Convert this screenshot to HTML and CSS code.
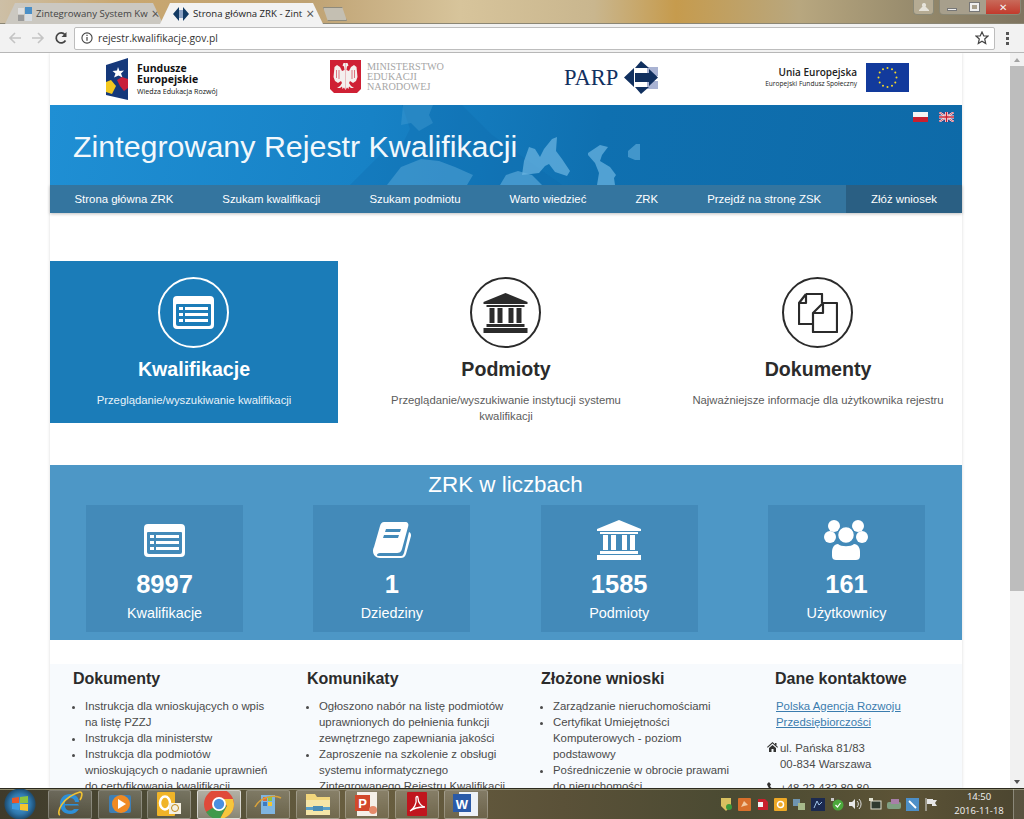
FILE: index.html
```html
<!DOCTYPE html>
<html lang="pl">
<head>
    <meta charset="UTF-8">
    <meta name="viewport" content="width=device-width, initial-scale=1.0">
    <title>Strona główna ZRK</title>
    <link rel="stylesheet" href="styles.css">
</head>
<body>
    <!-- shared icons -->
    <svg class="defs" width="0" height="0">
        <symbol id="i-list" viewBox="0 0 41 33">
            <path fill-rule="evenodd" d="M4 0h33a4 4 0 0 1 4 4v25a4 4 0 0 1-4 4H4a4 4 0 0 1-4-4V4a4 4 0 0 1 4-4zM4 8a1 1 0 0 0-1 1v19a2 2 0 0 0 2 2h31a2 2 0 0 0 2-2V9a1 1 0 0 0-1-1zM6 11h4v3H6zM12 11h23v3H12zM6 17h4v3H6zM12 17h23v3H12zM6 23h4v3H6zM12 23h23v3H12z"/>
        </symbol>
        <symbol id="i-bank" viewBox="0 0 44 40">
            <path d="M22 0l22 9v2H0V9zM3 12h38v2H3zM6 15h5v15H6zM14 15h5v15h-5zM25 15h5v15h-5zM33 15h5v15h-5zM3 31h38v3H3zM0 35h44v5H0z"/>
        </symbol>
        <symbol id="i-book" viewBox="0 0 38 36">
            <path fill-rule="evenodd" d="M11 0h21c3 0 4 2 3 5l-6 22c-1 3-2 4-6 4H7c-2 0-3 1-3 2s1 1 3 1h21c2 0 2-1 3-3l5-21c2 1 2 2 2 4l-5 18c-1 3-3 4-5 4H7c-4 0-7-3-7-7 0-1 0-2 1-4L7 4c1-3 2-4 4-4zM13 7l-1 3h15l1-3zM11 13l-1 3h15l1-3z"/>
        </symbol>
        <symbol id="i-users" viewBox="0 0 44 40">
            <circle cx="10" cy="6" r="6"/>
            <circle cx="34" cy="6" r="6"/>
            <circle cx="6" cy="17" r="6"/>
            <circle cx="38" cy="17" r="6"/>
            <path d="M14 24c-4 0-6 4-6 8v4c0 3 2 4 4 4h20c2 0 4-1 4-4v-4c0-4-2-8-6-8-3 3-13 3-16 0z"/>
            <circle cx="22" cy="15" r="8.500" stroke="#438ab9" stroke-width="1.500"/>
        </symbol>
    </svg>

    <header class="tabstrip">
        <div class="tab">
            <span class="tab-favicon">
                <svg width="14" height="14" viewBox="0 0 14 14"><rect x="7" width="7" height="7" fill="#4a8fc7"/><rect y="7" x="7" width="7" height="7" fill="#d8dde2"/><rect width="6" height="6" y="1" fill="#dfdfdf"/><rect y="8" width="6" height="6" fill="#9a9a9a"/></svg>
            </span>
            <span class="tab-title">Zintegrowany System Kw</span>
            <span class="tab-close">×</span>
        </div>
        <div class="tab tab-active">
            <span class="tab-favicon">
                <svg width="16" height="14" viewBox="0 0 16 14"><path d="M6 0v14L0 7zM10 0v14l6-7z" fill="#123a63"/><rect x="6" y="3" width="4" height="8" fill="#8da3c4"/></svg>
            </span>
            <span class="tab-title">Strona główna ZRK - Zint</span>
            <span class="tab-close">×</span>
        </div>
        <div class="tab-new"></div>
        <div class="win-user">
            <svg width="12" height="10" viewBox="0 0 12 10"><path d="M6 1a2 2 0 0 1 1.500 3.400L11 8v1H1V8l3.500-3.600A2 2 0 0 1 6 1z" fill="#e6e3da"/></svg>
        </div>
        <div class="win-buttons">
            <span class="win-btn win-min"><i></i></span>
            <span class="win-btn win-max"><i></i></span>
            <span class="win-btn win-close">✕</span>
        </div>
    </header>

    <div class="toolbar">
        <span class="nav-arrow is-off">
            <svg width="14" height="14" viewBox="0 0 14 14"><path d="M13 7H2M7 2L2 7l5 5" fill="none" stroke="currentColor" stroke-width="1.600"/></svg>
        </span>
        <span class="nav-arrow is-off">
            <svg width="14" height="14" viewBox="0 0 14 14"><path d="M1 7h11M7 2l5 5-5 5" fill="none" stroke="currentColor" stroke-width="1.600"/></svg>
        </span>
        <span class="nav-arrow">
            <svg width="14" height="14" viewBox="0 0 14 14"><path d="M11.500 9.500A5 5 0 1 1 11 3.700" fill="none" stroke="currentColor" stroke-width="1.700"/><path d="M12.500 1v5h-5z" fill="currentColor"/></svg>
        </span>
        <div class="omnibox">
            <svg width="12" height="12" viewBox="0 0 13 13"><circle cx="6.500" cy="6.500" r="5.500" fill="none" stroke="#444" stroke-width="1.200"/><path d="M6.500 5.500v4M6.500 3v1.400" stroke="#444" stroke-width="1.300"/></svg>
            <span class="omnibox-url">rejestr.kwalifikacje.gov.pl</span>
            <svg class="omnibox-star" width="14" height="14" viewBox="0 0 14 14"><path d="M7 1l1.800 4H13l-3.300 3 1 4.500L7 10.200 3.300 12.500l1-4.500L1 5h4.200z" fill="none" stroke="#444" stroke-width="1.200"/></svg>
        </div>
        <span class="kebab"><i></i><i></i><i></i></span>
    </div>

    <div class="viewport">
        <main class="page">
            <div class="logos">
                <div class="logo logo-fe">
                    <svg width="23" height="42" viewBox="0 0 23 42">
                        <path d="M0 7L22 0v42L0 37z" fill="#15387a"/>
                        <path d="M12 9l1.500 4 4.500-.5-3 3 1.500 4-4-2-4.500 2 1.500-4-3-2.500 4.500-.5z" fill="#fff"/>
                        <path d="M0 24l5-2 5 6-4 8-6-2z" fill="#f3c81e"/>
                        <path d="M11 22l5-3 6 2v9l-4 3-4-5z" fill="#c9203a"/>
                    </svg>
                    <div class="logo-fe-text">
                        <strong>Fundusze<br>Europejskie</strong>
                        <small>Wiedza Edukacja Rozwój</small>
                    </div>
                </div>
                <div class="logo logo-men">
                    <svg width="31" height="36" viewBox="0 0 31 36">
                        <path d="M0 1h31v29l-4 4H4l-4-4z" fill="#cf2034"/>
                        <g fill="#f4f0ee">
                            <path id="eagle-half" d="M15.500 4h-2l-1 2.500 1.500 1 .5 3.500-2.500 1-2-4-3-2-2.500 2-.5 5-.5 5 1.500 4 3 2 3-2 1 2-2 3-3 2h3l2-1.500.5 2.500 1.500-1.500 1.500 2.500z"/>
                            <path d="M15.500 4h2l1 2.500-1.500 1-.5 3.500 2.500 1 2-4 3-2 2.500 2 .5 5 .5 5-1.500 4-3 2-3-2-1 2 2 3 3 2h-3l-2-1.500-.5 2.500-1.500-1.500-1.500 2.500z"/>
                        </g>
                        <path d="M6.500 11v8M9 11v9M24.500 11v8M22 11v9" stroke="#cf2034" stroke-width="0.600"/>
                    </svg>
                    <div class="logo-men-text">MINISTERSTWO<br>EDUKACJI<br>NARODOWEJ</div>
                </div>
                <div class="logo logo-parp">
                    <span class="logo-parp-text">PARP</span>
                    <svg width="34" height="33" viewBox="0 0 34 33">
                        <path d="M23 6h11v9H23zM23 20h11v8H23z" fill="#a9b3d3"/>
                        <path d="M0 16.500L10 7v19zM17 0l8 7H11zM11 26h14l-8 7z" fill="#11305f"/>
                        <path d="M11 12h14V8l9 8.500-9 8.500v-4H11z" fill="#11305f"/>
                    </svg>
                </div>
                <div class="logo logo-eu">
                    <div class="logo-eu-text">
                        <strong>Unia Europejska</strong>
                        <small>Europejski Fundusz Społeczny</small>
                    </div>
                    <svg width="43" height="29" viewBox="0 0 43 29">
                        <rect width="43" height="29" fill="#123a9c"/>
                        <g fill="#f4d92a">
                            <circle cx="21.500" cy="5" r="1"/><circle cx="26" cy="6.200" r="1"/><circle cx="29.300" cy="9.500" r="1"/>
                            <circle cx="30.500" cy="14.500" r="1"/><circle cx="29.300" cy="19.500" r="1"/><circle cx="26" cy="22.800" r="1"/>
                            <circle cx="21.500" cy="24" r="1"/><circle cx="17" cy="22.800" r="1"/><circle cx="13.700" cy="19.500" r="1"/>
                            <circle cx="12.500" cy="14.500" r="1"/><circle cx="13.700" cy="9.500" r="1"/><circle cx="17" cy="6.200" r="1"/>
                        </g>
                    </svg>
                </div>
            </div>

            <div class="banner">
                <svg class="banner-map" width="912" height="80" viewBox="0 0 912 80">
                    <path d="M300 80l30-30 20-6 10-20-8-24h60l30 30 70 50z" fill="#0e68a8" opacity="0.28"/>
                    <path d="M353 0h30l-4 10 4 8-14 8-8-8-10 2z" fill="#4da3d8" opacity="0.35"/>
                    <path d="M337 80l14-18 20-8 18 2 16 6 18 8-6 10z" fill="#6db7e2" opacity="0.4"/>
                    <path d="M450 80l6-10 12-4 14 4 10 10z" fill="#6db7e2" opacity="0.55"/>
                    <path d="M472 70l2-14 5-14 6 2 5 8 4-8 8-10 5-2-1 14 6 8 8 12-3 5-12-4-6-8-4 2-6 7-8 1z" fill="#6db7e2" opacity="0.7"/>
                    <path d="M538 48l12-8 8 2-6 8-2 6 10 6 6 8-2 3 1 7h-18l2-12-4-10-7-8z" fill="#6db7e2" opacity="0.7"/>
                    <path d="M578 46l8-7 4 0 0 16-5 0-7-3z" fill="#6db7e2" opacity="0.55"/>
                </svg>
                <h1>Zintegrowany Rejestr Kwalifikacji</h1>
                <div class="flags">
                    <span class="flag-pl"></span>
                    <svg width="15" height="10" viewBox="0 0 15 10">
                        <rect width="15" height="10" fill="#2a4a8e"/>
                        <path d="M0 0l15 10M15 0L0 10" stroke="#fff" stroke-width="2"/>
                        <path d="M0 0l15 10M15 0L0 10" stroke="#c8202f" stroke-width="0.800"/>
                        <path d="M7.500 0v10M0 5h15" stroke="#fff" stroke-width="3"/>
                        <path d="M7.500 0v10M0 5h15" stroke="#c8202f" stroke-width="1.600"/>
                    </svg>
                </div>
            </div>

            <nav class="menu">
                <a href="#">Strona główna ZRK</a>
                <a href="#">Szukam kwalifikacji</a>
                <a href="#">Szukam podmiotu</a>
                <a href="#">Warto wiedzieć</a>
                <a href="#">ZRK</a>
                <a href="#">Przejdź na stronę ZSK</a>
                <a href="#" class="menu-apply">Złóż wniosek</a>
            </nav>

            <section class="cards">
                <div class="card card-active">
                    <div class="card-circle"><svg width="41" height="33"><use href="#i-list"/></svg></div>
                    <h2>Kwalifikacje</h2>
                    <p>Przeglądanie/wyszukiwanie kwalifikacji</p>
                </div>
                <div class="card">
                    <div class="card-circle"><svg width="45" height="40"><use href="#i-bank"/></svg></div>
                    <h2>Podmioty</h2>
                    <p>Przeglądanie/wyszukiwanie instytucji systemu<br>kwalifikacji</p>
                </div>
                <div class="card">
                    <div class="card-circle">
                        <svg class="icon-docs" width="40" height="40" viewBox="0 0 40 40">
                            <path d="M8 1h16v9M8 1L1 10v21h14M8 1v9H1"/>
                            <path d="M25 10h14v29H15V20zM25 10v10H15"/>
                        </svg>
                    </div>
                    <h2>Dokumenty</h2>
                    <p>Najważniejsze informacje dla użytkownika rejestru</p>
                </div>
            </section>

            <section class="stats">
                <h2>ZRK w liczbach</h2>
                <div class="stat-row">
                    <div class="stat">
                        <div class="stat-icon"><svg width="41" height="33"><use href="#i-list"/></svg></div>
                        <strong>8997</strong>
                        <span>Kwalifikacje</span>
                    </div>
                    <div class="stat">
                        <div class="stat-icon"><svg width="38" height="36"><use href="#i-book"/></svg></div>
                        <strong>1</strong>
                        <span>Dziedziny</span>
                    </div>
                    <div class="stat">
                        <div class="stat-icon"><svg width="44" height="40"><use href="#i-bank"/></svg></div>
                        <strong>1585</strong>
                        <span>Podmioty</span>
                    </div>
                    <div class="stat">
                        <div class="stat-icon"><svg width="44" height="40"><use href="#i-users"/></svg></div>
                        <strong>161</strong>
                        <span>Użytkownicy</span>
                    </div>
                </div>
            </section>

            <section class="bottom">
                <div class="bottom-col">
                    <h3>Dokumenty</h3>
                    <ul>
                        <li>Instrukcja dla wnioskujących o wpis na listę PZZJ</li>
                        <li>Instrukcja dla ministerstw</li>
                        <li>Instrukcja dla podmiotów wnioskujących o nadanie uprawnień do certyfikowania kwalifikacji</li>
                    </ul>
                </div>
                <div class="bottom-col">
                    <h3>Komunikaty</h3>
                    <ul>
                        <li>Ogłoszono nabór na listę podmiotów uprawnionych do pełnienia funkcji zewnętrznego zapewniania jakości</li>
                        <li>Zaproszenie na szkolenie z obsługi systemu informatycznego Zintegrowanego Rejestru Kwalifikacji</li>
                    </ul>
                </div>
                <div class="bottom-col">
                    <h3>Złożone wnioski</h3>
                    <ul>
                        <li>Zarządzanie nieruchomościami</li>
                        <li>Certyfikat Umiejętności Komputerowych - poziom podstawowy</li>
                        <li>Pośredniczenie w obrocie prawami do nieruchomości</li>
                    </ul>
                </div>
                <div class="bottom-col contact">
                    <h3>Dane kontaktowe</h3>
                    <a href="#">Polska Agencja Rozwoju Przedsiębiorczości</a>
                    <div class="contact-line">
                        <svg width="11" height="10" viewBox="0 0 11 10"><path d="M5.500 0L11 5l-.7.800L5.500 1.500.7 5.800 0 5zM2 6l3.500-3L9 6v4H6.500V7h-2v3H2zM8 1h1.500v2.500L8 2.200z" fill="#333"/></svg>
                        <span>ul. Pańska 81/83<br>00-834 Warszawa</span>
                    </div>
                    <div class="contact-line">
                        <svg width="11" height="10" viewBox="0 0 11 10"><path d="M2 0l2 2.500L3 4c.5 1.200 1.500 2.200 3 3l1.500-1L10 8 8.500 10C4 9.500 1 6 0 2z" fill="#333"/></svg>
                        <span>+48 22 432 80 80</span>
                    </div>
                </div>
            </section>
        </main>

        <div class="scrollbar">
            <span class="scroll-arrow scroll-up"></span>
            <div class="scroll-thumb"></div>
            <span class="scroll-arrow scroll-down"></span>
        </div>
    </div>

    <footer class="taskbar">
        <div class="start-orb">
            <svg width="18" height="18" viewBox="0 0 18 18"><path d="M1 3l7-1v6H1z" fill="#e8562a"/><path d="M9 2l8-1v7H9z" fill="#8cc43f"/><path d="M1 9h7v6l-7-1z" fill="#3d9ae0"/><path d="M9 9h8v7l-8-1z" fill="#f4c430"/></svg>
        </div>
        <div class="task-btn">
            <svg width="28" height="26" viewBox="0 0 28 26"><path d="M22 13H9c0-4 2-6 5-6s5 2 5 4h4c0-5-4-8-9-8-6 0-10 4-10 10s4 10 10 10c4 0 7-2 9-5h-5c-1 1-2 1.500-4 1.500-3 0-5-2-5-5h14z" fill="#2d8fd8"/><path d="M4 24C0 22 6 6 24 1c3 0 2 5 0 8" fill="none" stroke="#f1c232" stroke-width="1.600"/></svg>
        </div>
        <div class="task-btn">
            <svg width="24" height="24" viewBox="0 0 24 24"><rect x="1" y="3" width="22" height="18" rx="2" fill="#3f7fb5"/><circle cx="13" cy="12" r="9" fill="#f08a24"/><path d="M10 7l8 5-8 5z" fill="#fff"/></svg>
        </div>
        <div class="task-btn">
            <svg width="26" height="24" viewBox="0 0 26 24"><rect x="1" width="18" height="24" rx="1" fill="#f0b428"/><ellipse cx="9" cy="11" rx="5" ry="6.500" fill="none" stroke="#fff" stroke-width="2.500"/><rect x="13" y="11" width="12" height="11" fill="#f4f0e2"/><circle cx="19" cy="16" r="3.500" fill="none" stroke="#c08a1a"/></svg>
        </div>
        <div class="task-btn task-btn-on">
            <svg width="32" height="32" viewBox="0 0 32 32">
                <circle cx="16" cy="16" r="15" fill="#e04a3a"/>
                <path d="M3 24a15 15 0 0 0 14 7l7-13-8-2z" fill="#3f9a4c"/>
                <path d="M31 16a15 15 0 0 1-14 15l7-13-4-7h10z" fill="#f6c63c"/>
                <circle cx="16" cy="16" r="7" fill="#fff"/>
                <circle cx="16" cy="16" r="5.200" fill="#4a8fe0"/>
            </svg>
        </div>
        <div class="task-btn">
            <svg width="28" height="24" viewBox="0 0 28 24"><rect x="7" y="3" width="14" height="19" fill="#7fb5e0"/><rect x="9" y="5" width="4" height="4" fill="#e06a3a"/><rect x="14" y="5" width="4" height="4" fill="#8cc43f"/><rect x="9" y="10" width="4" height="4" fill="#3d7ac0"/><rect x="14" y="10" width="4" height="4" fill="#f4c430"/><path d="M1 15C6 5 20 2 27 6" fill="none" stroke="#d8a23a" stroke-width="1.500"/></svg>
        </div>
        <div class="task-btn">
            <svg width="26" height="24" viewBox="0 0 26 24"><path d="M1 2h9l2 3h13v5H1z" fill="#f2d67c"/><rect x="1" y="8" width="24" height="15" fill="#f5e6a8"/><rect x="1" y="15" width="24" height="3" fill="#5aa0c8"/><rect x="8" y="14" width="10" height="5" fill="#4a8db5"/></svg>
        </div>
        <div class="task-btn">
            <svg width="26" height="26" viewBox="0 0 26 26"><rect x="3" y="1" width="20" height="24" fill="#f4efe8"/><rect x="1" y="4" width="15" height="16" fill="#d2482a"/><text x="8.500" y="17" class="task-letter">P</text><circle cx="19" cy="19" r="4" fill="#e48a6a"/></svg>
        </div>
        <div class="task-btn">
            <svg width="24" height="26" viewBox="0 0 24 26"><rect x="2" y="1" width="20" height="24" rx="1" fill="#c0161e"/><path d="M5 20c4-2 7-8 6-13 0-2 2-2 2 0 0 5 4 9 7 9-4 0-10 0-15 4z" fill="none" stroke="#fff" stroke-width="1.300"/></svg>
        </div>
        <div class="task-btn">
            <svg width="28" height="26" viewBox="0 0 28 26"><rect x="7" y="1" width="19" height="24" fill="#eef2f8"/><rect x="1" y="3" width="18" height="18" fill="#2a5aa8"/><text x="10" y="18" class="task-letter">W</text></svg>
        </div>

        <div class="tray">
            <svg width="13" height="14" viewBox="0 0 13 14"><path d="M1 1h10v8l-5 5-5-5z" fill="#d8c060"/><circle cx="9" cy="10" r="3" fill="#3c9a3c"/></svg>
            <svg width="13" height="13" viewBox="0 0 13 13"><rect width="13" height="13" rx="1" fill="#d8702c"/><path d="M3 9l3-6 4 4-4 1z" fill="#f2c8a0"/></svg>
            <svg width="13" height="13" viewBox="0 0 13 13"><path d="M2 1h7l3 3v8H2z" fill="#c8202c"/><rect x="2" y="4" width="5" height="5" fill="#f2f2f2"/></svg>
            <svg width="13" height="13" viewBox="0 0 13 13"><rect width="13" height="13" rx="1" fill="#eda826"/><circle cx="6.500" cy="6.500" r="3" fill="none" stroke="#fff" stroke-width="1.500"/></svg>
            <svg width="14" height="13" viewBox="0 0 14 13"><rect x="1" y="1" width="7" height="7" fill="#6f95b0"/><rect x="6" y="5" width="7" height="7" fill="#a7b98a"/></svg>
            <svg width="14" height="13" viewBox="0 0 14 13"><rect width="14" height="13" fill="#1c2a50"/><path d="M3 10l3-7 2 4 3-3" fill="none" stroke="#9fc4e8"/></svg>
            <svg width="14" height="14" viewBox="0 0 14 14"><rect x="1" y="1" width="3" height="3" fill="#c8c8c8"/><circle cx="8" cy="8" r="5.500" fill="#4ca83c"/><path d="M5.500 8l2 2 3-4" fill="none" stroke="#fff" stroke-width="1.200"/></svg>
            <svg width="14" height="12" viewBox="0 0 14 12"><path d="M0 4h3l3-3v10L3 8H0z" fill="#e8e8e8"/><path d="M8 3a4 4 0 0 1 0 6M10 1a7 7 0 0 1 0 10" fill="none" stroke="#ddd"/></svg>
            <svg width="14" height="13" viewBox="0 0 14 13"><rect x="3" y="3" width="10" height="8" fill="#2f3a30" stroke="#e0e0d0"/><rect x="1" y="0" width="4" height="3" fill="#e0e0d0"/></svg>
            <svg width="14" height="13" viewBox="0 0 14 13"><rect y="4" width="14" height="7" rx="2" fill="#7f9f82"/><rect x="4" y="1" width="8" height="5" fill="#a77fa8"/></svg>
            <svg width="13" height="13" viewBox="0 0 13 13"><rect width="13" height="13" fill="#4d8fc8"/><path d="M3 3l7 7" stroke="#fff" stroke-width="1.800"/></svg>
            <svg width="14" height="14" viewBox="0 0 14 14"><path d="M2 1v13" stroke="#ddd"/><path d="M3 2h6v1h4l-2 3 2 3H8V7H3z" fill="#e6e6e6"/></svg>
        </div>
        <div class="clock">
            <span>14:50</span>
            <span>2016-11-18</span>
        </div>
        <div class="show-desktop"></div>
    </footer>
</body>
</html>
```

FILE: styles.css
```css
* {
    box-sizing: border-box;
}
html, body {
    height: 100%;
}
body {
    margin: 0;
    width: 1024px;
    height: 819px;
    overflow: hidden;
    display: flex;
    flex-direction: column;
    font-family: "Liberation Sans", Arial, sans-serif;
    background-color: #fff;
    color: #333;
}
.defs {
    position: absolute;
}

/* browser window */
.tabstrip {
    height: 24px;
    flex: none;
    display: flex;
    align-items: flex-end;
    padding-left: 5px;
    background: linear-gradient(90deg, #cdbfa6 0%, #c9a76f 12%, #bfa273 30%, #d7c49b 45%, #c9b68e 58%, #c69b4d 66%, #b8a77f 78%, #8f8468 92%, #7e7460 100%);
    box-shadow: inset 0 -1px 0 #8b8674;
}
.tab {
    width: 158px;
    height: 21px;
    padding: 0 9px 0 13px;
    display: flex;
    align-items: center;
    gap: 4px;
    font-family: "Open Sans", sans-serif;
    font-size: 9.600px;
    color: #444;
    background-color: #cbc8c1;
    clip-path: polygon(0 100%, 10px 0, calc(100% - 10px) 0, 100% 100%);
}
.tab-active {
    width: 163px;
    margin-left: -3px;
    padding-right: 13px;
    background-color: #f2f2f2;
    color: #222;
}
.tab-favicon {
    display: flex;
    flex: none;
}
.tab-title {
    flex: 1;
    white-space: nowrap;
}
.tab-close {
    font-size: 14px;
    line-height: 14px;
    color: #555;
}
.tab-new {
    width: 24px;
    height: 14px;
    margin-bottom: 3px;
    background-color: #c4bfb2;
    border: 1px solid #8e8a7c;
    clip-path: polygon(0 0, 80% 0, 100% 100%, 20% 100%);
}
.win-user {
    width: 21px;
    height: 15px;
    margin: 0 0 9px auto;
    display: flex;
    align-items: center;
    justify-content: center;
    border: 1px solid #8a8876;
    border-top: 0;
    border-radius: 0 0 4px 4px;
    background-color: #b5ab93;
}
.win-buttons {
    display: flex;
    height: 15px;
    margin: 0 3px 9px 5px;
    border: 1px solid #8a8876;
    border-top: 0;
    border-radius: 0 0 4px 4px;
    overflow: hidden;
}
.win-btn {
    display: flex;
    align-items: center;
    justify-content: center;
    height: 100%;
    width: 23px;
    background-color: #a79f8c;
}
.win-min i {
    width: 10px;
    height: 3px;
    margin-top: 4px;
    background-color: #eee;
    border: 1px solid #777;
}
.win-max i {
    width: 9px;
    height: 8px;
    border: 2px solid #eee;
    outline: 1px solid #777;
}
.win-close {
    width: 34px;
    font-size: 10px;
    color: #f5f5f5;
    background: linear-gradient(#c96a5a, #c23a2c);
}
.toolbar {
    height: 29px;
    flex: none;
    display: flex;
    align-items: center;
    padding: 0 8px 0 3px;
    background-color: #f2f2f2;
    border-bottom: 1px solid #b7b7b7;
}
.nav-arrow {
    width: 23px;
    display: flex;
    justify-content: center;
    color: #444;
}
.nav-arrow.is-off {
    color: #c4c4c4;
}
.omnibox {
    width: 921px;
    height: 23px;
    margin-left: 2px;
    padding: 0 5px 0 6px;
    display: flex;
    align-items: center;
    gap: 5px;
    background-color: #fff;
    border: 1px solid #bdbdbd;
    border-radius: 2px;
}
.omnibox-url {
    flex: 1;
    font-family: "Open Sans", sans-serif;
    font-size: 10.300px;
    color: #333;
}
.kebab {
    margin-left: 11px;
    display: flex;
    flex-direction: column;
    gap: 2px;
}
.kebab i {
    width: 3px;
    height: 3px;
    background-color: #555;
}

/* page area */
.viewport {
    flex: 1;
    min-height: 0;
    display: flex;
    overflow: hidden;
}
.page {
    width: 912px;
    margin-left: 50px;
    margin-right: 48px;
    flex: none;
    box-shadow: 0 0 3px rgba(0, 0, 0, 0.15);
}
.scrollbar {
    width: 14px;
    flex: none;
    display: flex;
    flex-direction: column;
    background-color: #f1f1f1;
}
.scroll-arrow {
    height: 13px;
    flex: none;
    display: flex;
    align-items: center;
    justify-content: center;
}
.scroll-up::before {
    content: "";
    border: 3px solid transparent;
    border-bottom: 4px solid #a3a3a3;
    border-top: 0;
}
.scroll-down {
    margin-top: auto;
}
.scroll-down::before {
    content: "";
    border: 3px solid transparent;
    border-top: 4px solid #505050;
    border-bottom: 0;
}
.scroll-thumb {
    height: 525px;
    background-color: #bdbdbd;
}

.logos {
    height: 52px;
    position: relative;
    background-color: #fff;
}
.logo {
    position: absolute;
    display: flex;
    align-items: center;
}
.logo-fe {
    left: 56px;
    top: 5px;
    gap: 8px;
}
.logo-fe-text {
    font-family: "Open Sans", sans-serif;
    color: #111;
}
.logo-fe-text strong {
    display: block;
    font-size: 10.500px;
    line-height: 11px;
    font-weight: 700;
}
.logo-fe-text small {
    display: block;
    margin-top: 2px;
    font-size: 7.100px;
    line-height: 9px;
}
.logo-men {
    left: 280px;
    top: 6px;
    gap: 6px;
}
.logo-men-text {
    font-family: "Liberation Serif", serif;
    font-size: 10.200px;
    line-height: 10.300px;
    color: #a6a6a6;
}
.logo-parp {
    left: 514px;
    top: 8px;
    gap: 6px;
}
.logo-parp-text {
    font-family: "Liberation Serif", serif;
    font-size: 22.500px;
    color: #11305f;
}
.logo-eu {
    right: 53px;
    top: 10px;
    gap: 9px;
}
.logo-eu-text {
    text-align: right;
    font-family: "Open Sans", sans-serif;
    color: #222;
}
.logo-eu-text strong {
    display: block;
    font-size: 10px;
    line-height: 13px;
    font-weight: 600;
}
.logo-eu-text small {
    display: block;
    font-size: 6.600px;
    line-height: 10px;
}

.banner {
    height: 80px;
    position: relative;
    overflow: hidden;
    padding: 21px 0 0 23px;
    background: linear-gradient(100deg, #1f8fd4 0%, #1782c6 35%, #0f70b0 60%, #0e6aa8 100%);
}
.banner-map {
    position: absolute;
    left: 0;
    top: 0;
}
.banner h1 {
    position: relative;
    margin: 0;
    font-size: 30.400px;
    line-height: 40px;
    font-weight: 400;
    color: #f2f8fc;
}
.flags {
    position: absolute;
    top: 7px;
    right: 8px;
    display: flex;
    gap: 11px;
}
.flag-pl {
    width: 15px;
    height: 10px;
    background: linear-gradient(#f4f4f4 50%, #c8202f 50%);
}

.menu {
    height: 28px;
    display: flex;
    background-color: #34759f;
    box-shadow: 0 1px 3px rgba(0, 0, 0, 0.25);
}
.menu a {
    padding: 0 24.500px;
    font-size: 11.400px;
    line-height: 28px;
    color: #fff;
    text-decoration: none;
    white-space: nowrap;
}
.menu .menu-apply {
    margin-left: auto;
    width: 116px;
    padding: 0;
    text-align: center;
    background-color: #2a5f83;
}

.cards {
    margin-top: 48px;
    display: grid;
    grid-template-columns: repeat(3, 288px);
    gap: 24px;
}
.card {
    height: 162px;
    padding-top: 16px;
    text-align: center;
    color: #2b2b2b;
}
.card-active {
    background-color: #1b7cb8;
    color: #fff;
}
.card-circle {
    width: 71px;
    height: 71px;
    margin-left: 108px;
    display: flex;
    align-items: center;
    justify-content: center;
    border: 2px solid currentColor;
    border-radius: 50%;
}
.card-circle svg {
    fill: currentColor;
}
.card-circle .icon-docs {
    fill: none;
    stroke: currentColor;
    stroke-width: 2.200;
    stroke-linejoin: round;
}
.card h2 {
    margin: 9px 0 0;
    font-size: 19.600px;
    line-height: 24px;
    font-weight: 700;
}
.card p {
    margin: 11px 0 0;
    font-size: 11.300px;
    line-height: 16px;
    color: #5c5c5c;
}
.card-active p {
    color: #e8f2f9;
}

.stats {
    height: 175px;
    margin-top: 42px;
    padding: 0 37px 0 36px;
    background-color: #4d97c6;
    color: #fff;
}
.stats h2 {
    margin: 0;
    height: 40px;
    font-size: 22.400px;
    line-height: 39px;
    font-weight: 400;
    text-align: center;
}
.stat-row {
    display: flex;
    justify-content: space-between;
}
.stat {
    width: 157px;
    height: 127px;
    display: flex;
    flex-direction: column;
    align-items: center;
    background-color: #438ab9;
}
.stat-icon {
    height: 40px;
    margin-top: 15px;
    display: flex;
    align-items: center;
}
.stat-icon svg {
    fill: #fff;
}
.stat strong {
    margin-top: 9px;
    font-size: 25.500px;
    line-height: 30px;
}
.stat span {
    margin-top: 5px;
    font-size: 14.400px;
    line-height: 18px;
}

.bottom {
    margin-top: 24px;
    padding: 5px 0 0 23px;
    display: grid;
    grid-template-columns: repeat(3, 234px) 1fr;
    background-color: #f7fafd;
    font-size: 11.400px;
    line-height: 16px;
    color: #4a4a4a;
}
.bottom-col {
    padding-right: 34px;
}
.bottom h3 {
    margin: 0 0 9px;
    font-size: 16px;
    line-height: 20px;
    font-weight: 700;
    color: #2b2b2b;
}
.bottom ul {
    margin: 0;
    padding-left: 12px;
}
.contact {
    padding-right: 20px;
}
.contact a {
    display: block;
    margin-left: 1px;
    color: #3b7cae;
}
.contact-line {
    display: flex;
    gap: 2px;
    margin: 8px 0 0 -8px;
}
.contact a + .contact-line {
    margin-top: 10px;
}
.contact-line svg {
    flex: none;
    margin-top: 2px;
}

/* windows taskbar */
.taskbar {
    height: 31px;
    flex: none;
    display: flex;
    align-items: center;
    padding-left: 3px;
    background: linear-gradient(90deg, #3f3a2a 0%, #4c4a34 15%, #6a5f40 35%, #5a5138 55%, #4a4a32 72%, #5c5336 88%, #4b4530 100%);
    border-top: 1px solid #2c2a1e;
    box-shadow: inset 0 1px 0 #8d8a6e;
}
.start-orb {
    width: 34px;
    height: 30px;
    margin-right: 11px;
    display: flex;
    align-items: center;
    justify-content: center;
    background: radial-gradient(circle, #4fa3dc 0, #2f78ae 10px, #1f4e72 15px, transparent 16px);
}
.task-btn {
    width: 44px;
    height: 29px;
    margin-right: 5.500px;
    display: flex;
    align-items: center;
    justify-content: center;
    overflow: hidden;
    background: linear-gradient(rgba(255, 255, 255, 0.22), rgba(255, 255, 255, 0.08));
    border: 1px solid rgba(255, 255, 255, 0.25);
    border-radius: 2px;
}
.task-btn-on {
    background: linear-gradient(rgba(255, 255, 255, 0.55), rgba(255, 255, 255, 0.3));
    border-color: rgba(255, 255, 255, 0.6);
}
.task-letter {
    font-family: "Liberation Sans", sans-serif;
    font-size: 13px;
    font-weight: 700;
    fill: #fff;
    text-anchor: middle;
}
.tray {
    margin-left: auto;
    display: flex;
    align-items: center;
    gap: 5px;
}
.tray svg {
    flex: none;
}
.clock {
    width: 68px;
    margin-left: 7px;
    display: flex;
    flex-direction: column;
    align-items: center;
    font-family: "Open Sans", sans-serif;
    font-size: 9.500px;
    line-height: 14px;
    color: #f2f2f2;
}
.show-desktop {
    width: 11px;
    height: 30px;
    background-color: rgba(255, 255, 255, 0.08);
    border-left: 1px solid rgba(255, 255, 255, 0.3);
}
```
